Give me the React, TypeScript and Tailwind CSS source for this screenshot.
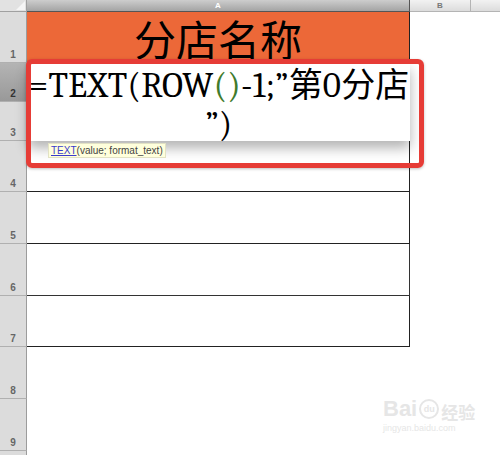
import React from "react";

const ROWS = [
  { n: 1, head: "bg-[#dcdcdc] text-[#666]", cell: "bg-[#ec6838] border-r border-[#222]" },
  { n: 2, head: "bg-gradient-to-b from-[#b4b4b4] to-[#999999] text-[#333]", cell: "border-r border-[#222]" },
  { n: 3, head: "bg-[#dcdcdc] text-[#666]", cell: "border-r border-b border-[#222]" },
  { n: 4, head: "bg-[#dcdcdc] text-[#666]", cell: "border-r border-b border-[#222]" },
  { n: 5, head: "bg-[#dcdcdc] text-[#666]", cell: "border-r border-b border-[#222]" },
  { n: 6, head: "bg-[#dcdcdc] text-[#666]", cell: "border-r border-b border-[#333]" },
  { n: 7, head: "bg-[#dcdcdc] text-[#666]", cell: "border-r border-b border-[#222]" },
  { n: 8, head: "bg-[#dcdcdc] text-[#666]", cell: "" },
  { n: 9, head: "bg-[#dcdcdc] text-[#666]", cell: "" },
];

export default function App() {
  return (
    <div className="relative h-[455px] w-[500px] overflow-hidden bg-white font-['Liberation_Sans',sans-serif]">
      {/* ── Sheet grid ─────────────────────── */}
      <div className="grid h-full w-full grid-cols-[27px_383px_61px_1fr] grid-rows-[12px_51px_39px_39px_51px_52px_52px_51px_52px_52px_1fr]">
        {/* column headers */}
        <div className="relative border-r border-b border-[#a0a0a0] bg-[#e2e2e2]">
          <svg className="absolute right-[1px] bottom-[1px]" width="9" height="9" viewBox="0 0 9 9">
            <path d="M9 0 L9 9 L0 9 Z" fill="#f6f6f6" />
          </svg>
        </div>
        <div className="flex items-center justify-center border-r border-b border-[#555] bg-gradient-to-b from-[#cdcdcd] to-[#a4a4a4] text-[8px] font-bold leading-none text-white">
          A
        </div>
        <div className="flex items-center justify-center border-r border-b border-[#b4b4b4] bg-gradient-to-b from-[#f2f2f2] to-[#dcdcdc] text-[8px] font-bold leading-none text-[#777]">
          B
        </div>
        <div className="border-b border-[#b4b4b4] bg-gradient-to-b from-[#f2f2f2] to-[#dcdcdc]" />

        {ROWS.map((row) => (
          <React.Fragment key={row.n}>
            <div
              className={`flex items-end justify-center border-r border-b border-r-[#9c9c9c] border-b-[#b0b0b0] pb-[2px] text-[10px] font-bold leading-none ${row.head}`}
            >
              {row.n}
            </div>
            <div className={`flex items-center justify-center ${row.cell}`}>
              {row.n === 1 && (
                <span className="font-['Noto_Sans_CJK_SC',sans-serif] text-[42px] leading-none text-black">
                  分店名称
                </span>
              )}
            </div>
            <div />
            <div />
          </React.Fragment>
        ))}
        {/* row 10, cut off by the window */}
        <div className="border-r border-[#9c9c9c] bg-[#dcdcdc]" />
        <div />
        <div />
        <div />
      </div>

      {/* ── In-cell editor ─────────────────── */}
      <div className="absolute left-[28px] top-[63px] h-[78px] w-[382px] bg-white shadow-[0_7px_12px_rgba(0,0,0,0.3)]">
        <div className="whitespace-nowrap text-center font-serif text-[35px] leading-[39px] tracking-[0.3px] text-black [font-family:'Liberation_Serif',serif]">
          =TEXT(ROW<span className="text-[#3f7b2c]">()</span>-1;”
          <span className="font-['Noto_Sans_CJK_SC',sans-serif] text-[34px] tracking-normal">第</span>0
          <span className="font-['Noto_Sans_CJK_SC',sans-serif] text-[34px] tracking-normal">分店</span>
          <br />
          ”)
        </div>
      </div>

      {/* Function hint */}
      <div className="absolute left-[48px] top-[143px] h-[15px] whitespace-nowrap border border-[#e2e2c4] bg-[#ffffdc] px-[2px] text-[10px] leading-[13px] text-[#444]">
        <span className="text-[#3b3bcc] underline">TEXT</span>(value; format_text)
      </div>

      {/* Red highlight */}
      <div className="absolute left-[26px] top-[59px] h-[109px] w-[398px] rounded-[6px] border-[5px] border-[#e63c36] shadow-[0_1px_3px_rgba(0,0,0,0.25)]" />

      {/* Watermark */}
      <div className="absolute left-[383px] top-[398px] flex flex-col text-[#e6e6e6]">
        <div className="flex items-end gap-[2px] leading-none">
          <span className="text-[22px] font-bold">Bai</span>
          <span className="mb-[1px] flex h-[20px] w-[20px] items-center justify-center rounded-full border-2 border-[#e6e6e6] text-[9px] font-bold">
            du
          </span>
          <span className="font-['Noto_Sans_CJK_SC',sans-serif] text-[17px] font-bold">经验</span>
        </div>
        <span className="mt-[4px] text-[9px] leading-none">jingyan.baidu.com</span>
      </div>
    </div>
  );
}
